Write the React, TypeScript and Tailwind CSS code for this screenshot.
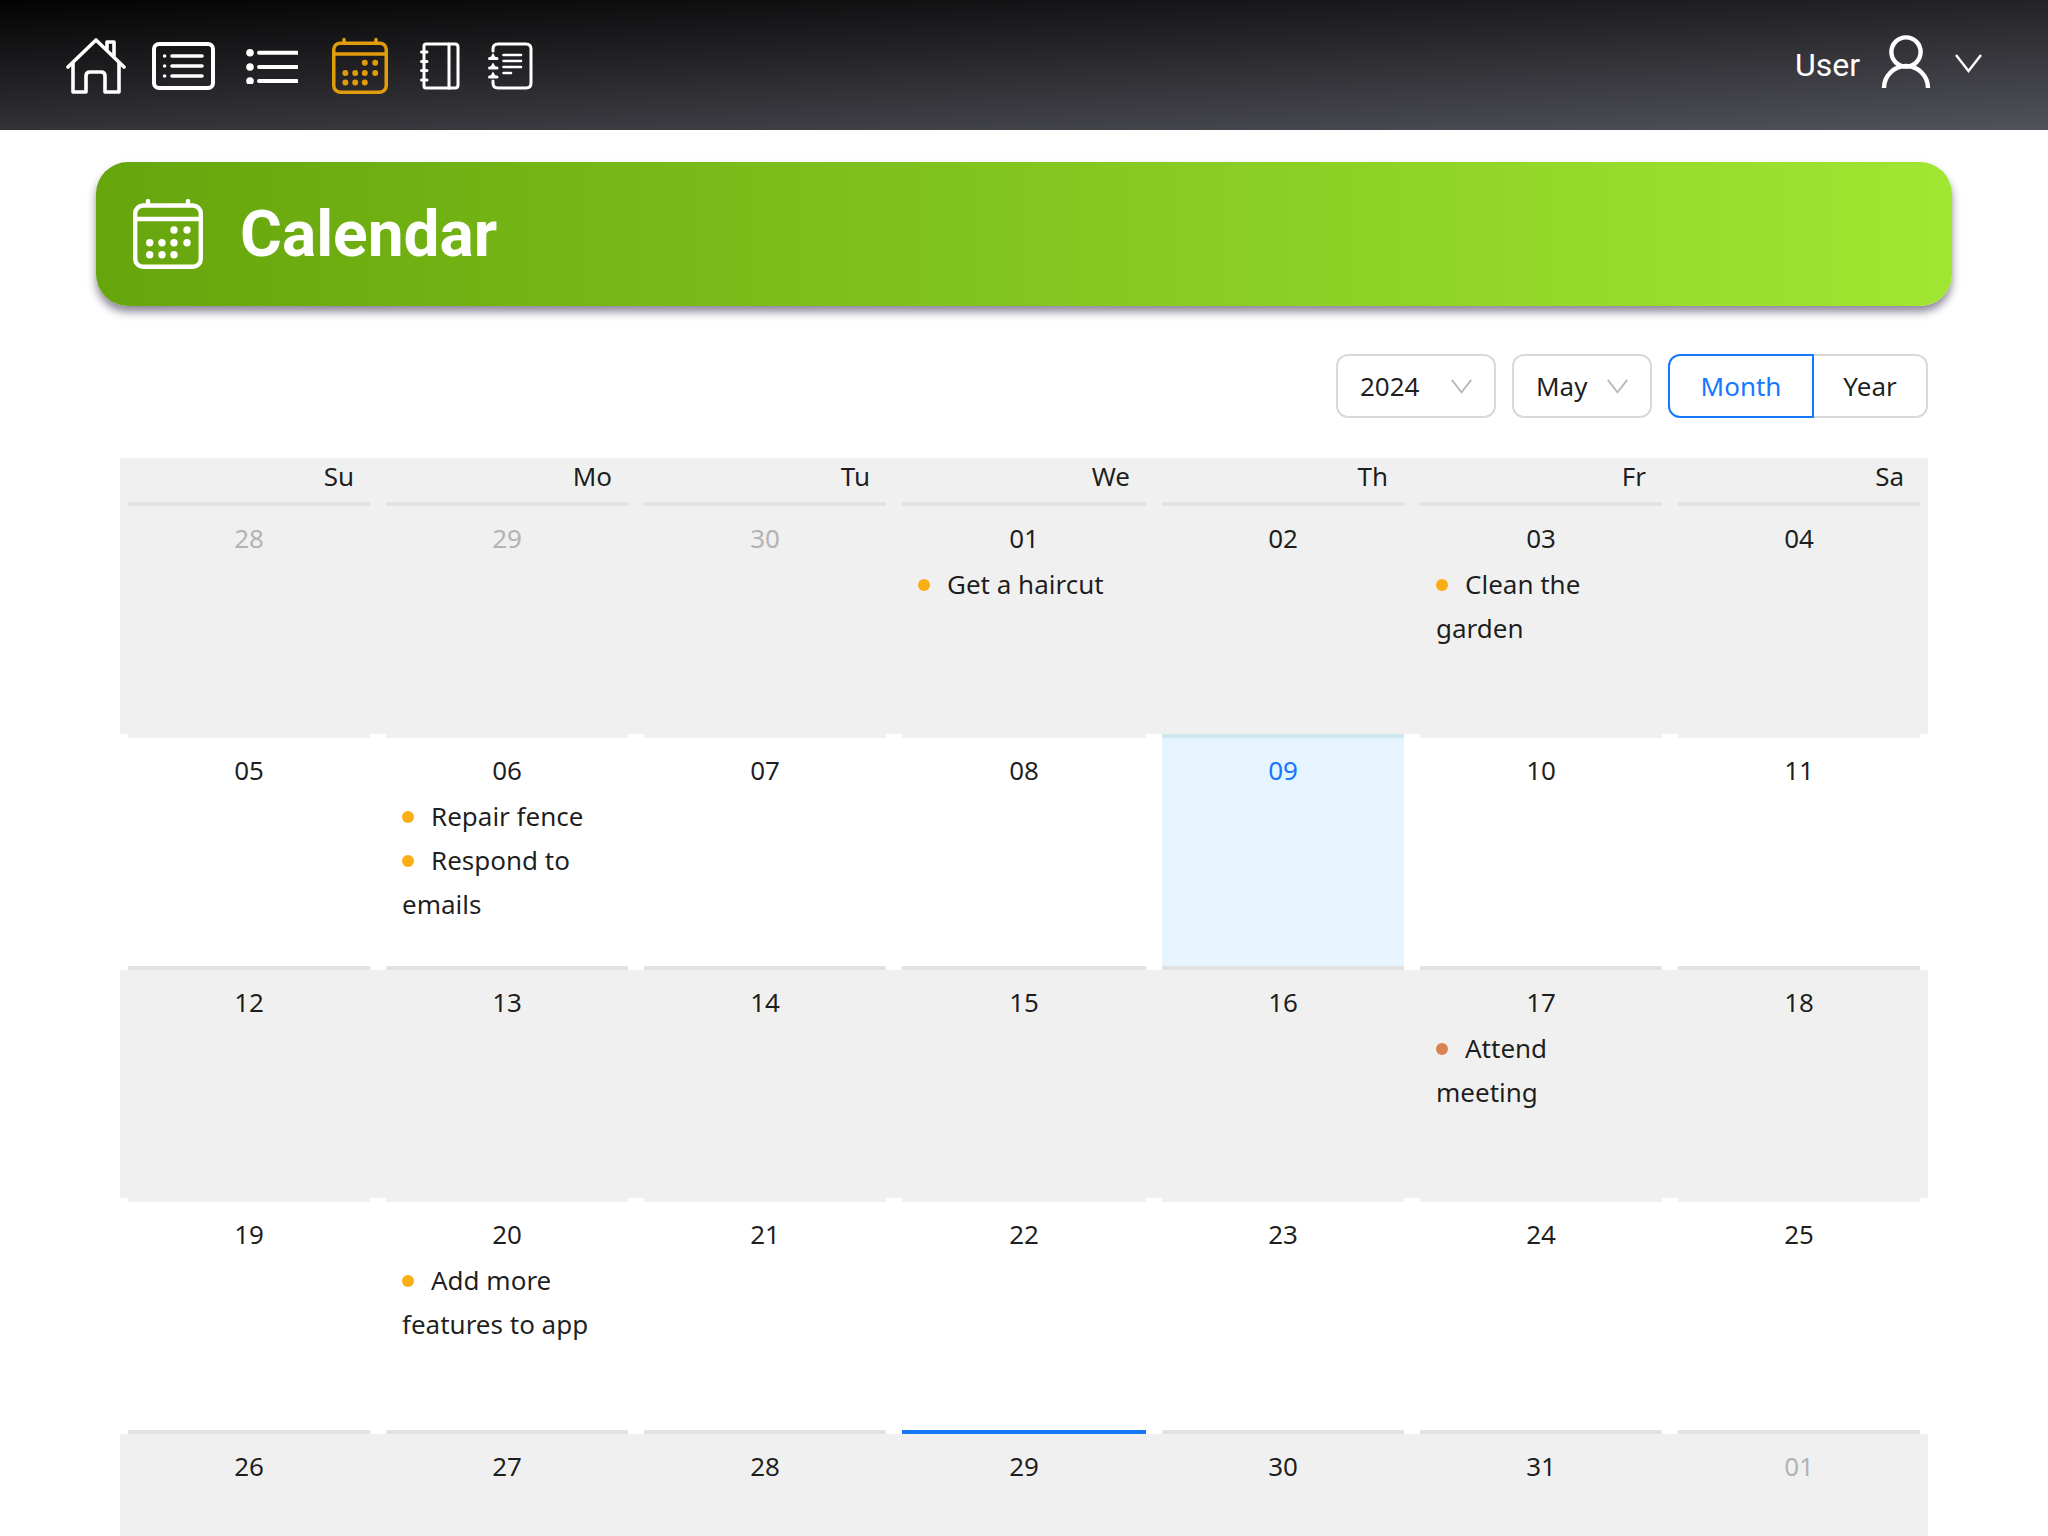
import { ReactElement } from 'react'

const weekDays = ['Su', 'Mo', 'Tu', 'We', 'Th', 'Fr', 'Sa']

interface DayData {
	label: string
	muted?: boolean
	selected?: boolean
	today?: boolean
	events?: { text: string; dot?: string }[]
}

const weeks: DayData[][] = [
	[
		{ label: '28', muted: true },
		{ label: '29', muted: true },
		{ label: '30', muted: true },
		{ label: '01', events: [{ text: 'Get a haircut' }] },
		{ label: '02' },
		{ label: '03', events: [{ text: 'Clean the garden' }] },
		{ label: '04' },
	],
	[
		{ label: '05' },
		{ label: '06', events: [{ text: 'Repair fence' }, { text: 'Respond to emails' }] },
		{ label: '07' },
		{ label: '08' },
		{ label: '09', selected: true },
		{ label: '10' },
		{ label: '11' },
	],
	[
		{ label: '12' },
		{ label: '13' },
		{ label: '14' },
		{ label: '15' },
		{ label: '16' },
		{ label: '17', events: [{ text: 'Attend meeting', dot: 'bg-[#d98350]' }] },
		{ label: '18' },
	],
	[
		{ label: '19' },
		{ label: '20', events: [{ text: 'Add more features to app' }] },
		{ label: '21' },
		{ label: '22' },
		{ label: '23' },
		{ label: '24' },
		{ label: '25' },
	],
	[
		{ label: '26' },
		{ label: '27' },
		{ label: '28' },
		{ label: '29', today: true },
		{ label: '30' },
		{ label: '31' },
		{ label: '01', muted: true },
	],
]

const HomeIcon = () => (
	<svg width="60" height="56" viewBox="0 0 60 56" fill="none" stroke="white" strokeWidth="3.6" strokeLinecap="round" strokeLinejoin="round">
		<path d="M2 29 L30 2 L58 29" />
		<path d="M7 25 V54 H20 V38 Q20 34 24 34 H35 Q39 34 39 38 V54 H53 V25" />
		<path d="M41 11 V4 H48 V18" />
	</svg>
)

const ListBoxIcon = () => (
	<svg width="63" height="48" viewBox="0 0 63 48" fill="none" stroke="white">
		<rect x="2" y="2" width="59" height="44" rx="5" strokeWidth="4" />
		{[14, 24, 34].map(y => (
			<g key={y}>
				<circle cx="12.6" cy={y} r="1.8" fill="white" stroke="none" />
				<path d={`M20 ${y} H50`} strokeWidth="3.6" strokeLinecap="round" />
			</g>
		))}
	</svg>
)

const BulletsIcon = () => (
	<svg width="52" height="35" viewBox="0 0 52 35" fill="none" stroke="white">
		{[3.8, 18, 32].map(y => (
			<g key={y}>
				<circle cx="4" cy={y} r="3.8" fill="white" stroke="none" />
				<path d={`M13 ${y} H51`} strokeWidth="4" strokeLinecap="round" />
			</g>
		))}
	</svg>
)

const CalendarIcon = ({ size, color }: { size: number; color: string }) => (
	<svg width={size} height={size} viewBox="0 0 70 70" fill="none" stroke={color}>
		<rect x="2.2" y="6.5" width="65.6" height="61.3" rx="8" strokeWidth="4.4" />
		<path d="M2.2 20 H67.8" strokeWidth="4.4" />
		<path d="M15 2 V6 M55 2 V6" strokeWidth="4.4" strokeLinecap="round" />
		{[[41, 31], [54, 31], [16.7, 43.7], [29, 43.7], [41, 43.7], [54, 43.7], [16.7, 55.7], [29, 55.7], [41, 55.7]].map(([cx, cy]) => (
			<circle key={`${cx}-${cy}`} cx={cx} cy={cy} r="3.7" fill={color} stroke="none" />
		))}
	</svg>
)

const NotebookIcon = () => (
	<svg width="40" height="48" viewBox="0 0 40 48" fill="none" stroke="white" strokeWidth="3" strokeLinecap="round">
		<path d="M4 4 Q4 2 6 2 H35 Q38 2 38 5 V43 Q38 46 35 46 H6 Q4 46 4 44 Z" />
		<path d="M29 2 V46" />
		<path d="M1.5 10 H7 M1.5 19.5 H7 M1.5 28.5 H7 M1.5 38 H7" />
	</svg>
)

const NotesIcon = () => (
	<svg width="45" height="48" viewBox="0 0 45 48" fill="none" stroke="white" strokeLinecap="round">
		<path d="M5 9 V7 Q5 2 10 2 H38 Q43 2 43 7 V41 Q43 46 38 46 H10 Q5 46 5 41 V39" strokeWidth="3" />
		<path d="M1.5 16.5 H9 M1.5 26 H9 M1.5 35 H9" strokeWidth="3" />
		<path d="M5 11 L8 16 H2 Z M5 20.5 L8 25.5 H2 Z M5 29.5 L8 34.5 H2 Z" fill="white" stroke="none" />
		<path d="M15.5 13 H33 M15.5 19 H33 M15.5 25 H33 M15.5 31 H23" strokeWidth="2.6" />
	</svg>
)

const UserIcon = () => (
	<svg width="50" height="53" viewBox="0 0 50 53" fill="none" stroke="white" strokeWidth="4.4">
		<circle cx="25" cy="17" r="14.6" />
		<path d="M3 53 A22 22 0 0 1 47 53" />
	</svg>
)

const Chevron = ({ className, color }: { className?: string; color: string }) => (
	<svg className={className} viewBox="0 0 27 19" fill="none" stroke={color} strokeWidth="2.4">
		<path d="M1 1 L13.5 17 L26 1" />
	</svg>
)

const Navbar = (): ReactElement => (
	<div className="flex h-[130px] items-center justify-between bg-[linear-gradient(177.5deg,#030303,#52525b)] px-[66px] font-['Roboto',sans-serif]">
		<div className="flex items-center pt-0.5">
			<HomeIcon />
			<div className="ml-[26px]"><ListBoxIcon /></div>
			<div className="ml-[31px]"><BulletsIcon /></div>
			<div className="ml-[34px]"><CalendarIcon size={56} color="#e19c0b" /></div>
			<div className="ml-[32px]"><NotebookIcon /></div>
			<div className="ml-[28px]"><NotesIcon /></div>
		</div>
		<div className="flex items-center">
			<span className="text-[32px] text-white">User</span>
			<div className="mb-[7px] ml-[21px]"><UserIcon /></div>
			<Chevron className="mb-[3px] ml-[24px] h-[19px] w-[27px]" color="white" />
		</div>
	</div>
)

const Banner = (): ReactElement => (
	<div className="mx-24 mt-8 flex h-[144px] items-center rounded-[32px] bg-[linear-gradient(90deg,#66a50c,#a1e632)] pl-[37px] shadow-[0_6px_8px_rgba(50,40,70,0.55)]">
		<CalendarIcon size={70} color="white" />
		<h1 className="ml-[37px] pt-0.5 font-['Roboto',sans-serif] text-[64px] font-bold text-white">Calendar</h1>
	</div>
)

const Controls = (): ReactElement => (
	<div className="mx-[120px] mt-12 flex h-16 justify-end">
		<div className="flex w-[160px] items-center justify-between rounded-xl border-2 border-[#d9d9d9] px-[22px]">
			<span>2024</span>
			<Chevron className="h-[15px] w-[21px]" color="#b8b8b8" />
		</div>
		<div className="ml-4 flex w-[140px] items-center justify-between rounded-xl border-2 border-[#d9d9d9] px-[22px]">
			<span>May</span>
			<Chevron className="h-[15px] w-[21px]" color="#b8b8b8" />
		</div>
		<div className="ml-4 flex">
			<div className="flex w-[146px] items-center justify-center rounded-l-xl border-2 border-[#1677ff] text-[#1677ff]">Month</div>
			<div className="flex w-[114px] items-center justify-center rounded-r-xl border-y-2 border-r-2 border-[#d9d9d9]">Year</div>
		</div>
	</div>
)

const Day = ({ day, striped }: { day: DayData; striped: boolean }): ReactElement => {
	let line = striped ? 'bg-[#e2e2e2]' : 'bg-[#f0f0f0]'
	if (day.selected) line = 'bg-[#cfe8f0]'
	if (day.today) line = 'bg-[#1677ff]'

	return (
		<div className={`mx-2 flex flex-col ${day.selected ? 'bg-[#e6f4ff]' : ''}`}>
			<div className={`h-1 ${line}`} />
			<div className={`mt-2.5 text-center ${day.muted ? 'text-[#b3b3b3]' : day.selected ? 'text-[#1677ff]' : ''}`}>{day.label}</div>
			<div className="mt-0.5 px-4">
				{day.events?.map(event => (
					<div key={event.text}>
						<span className={`mr-[17px] inline-block size-3 rounded-full align-[3px] ${event.dot ?? 'bg-[#faad14]'}`} />
						{event.text}
					</div>
				))}
			</div>
		</div>
	)
}

const MonthGrid = (): ReactElement => (
	<div className="mx-[120px] mt-10">
		<div className="grid grid-cols-[258px_258px_258px_260px_258px_258px_258px] bg-[#f0f0f0]">
			{weekDays.map(name => (
				<div key={name} className="h-11 pr-6 text-right leading-9">{name}</div>
			))}
		</div>
		{weeks.map((week, i) => {
			const striped = i % 2 === 0
			return (
				<div
					key={week[0].label}
					className={`grid h-[232px] grid-cols-[258px_258px_258px_260px_258px_258px_258px] ${striped ? 'bg-[#f0f0f0]' : 'bg-white'} ${striped && i > 0 ? 'border-t-4 border-white [&>div]:-mt-1' : ''}`}
				>
					{week.map(day => (
						<Day key={day.label} day={day} striped={striped} />
					))}
				</div>
			)
		})}
	</div>
)

export default function App(): ReactElement {
	return (
		<div className="h-screen overflow-hidden bg-white font-['Noto_Sans',sans-serif] text-[26px] leading-[44px] text-[rgba(0,0,0,0.88)]">
			<Navbar />
			<Banner />
			<Controls />
			<MonthGrid />
		</div>
	)
}
